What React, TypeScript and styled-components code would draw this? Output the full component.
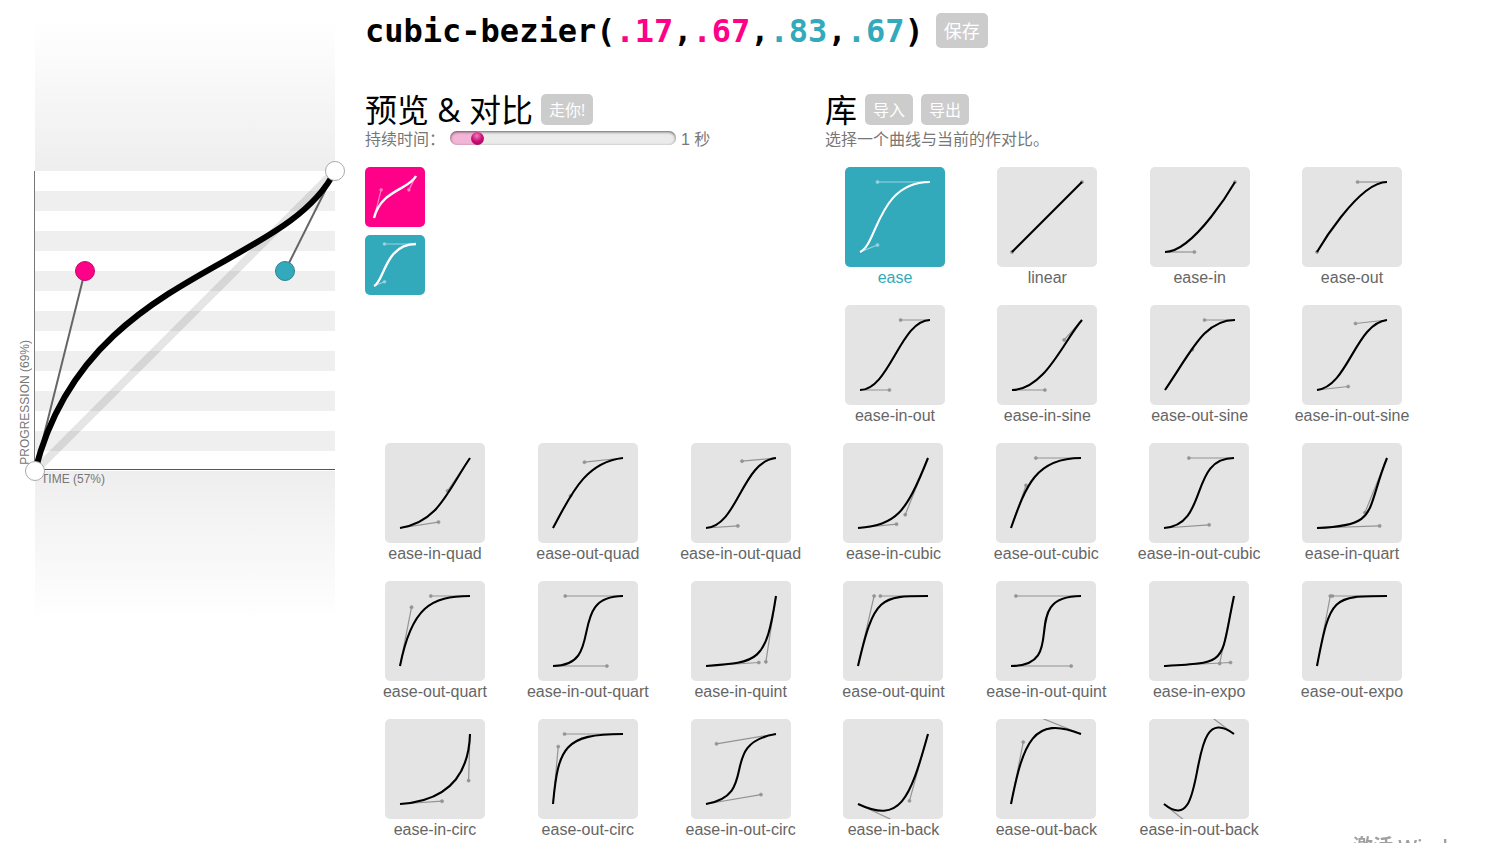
import React, { useState } from 'react';
import styled, { createGlobalStyle, css } from 'styled-components';

type Bezier = [number, number, number, number];
type Tone = 'plain' | 'pink' | 'teal';

const PINK = '#f08';
const TEAL = '#3ab';
const CJK = '"Noto Sans CJK SC"';

const GlobalStyle = createGlobalStyle`
  * { box-sizing: border-box; }
  body {
    margin: 0;
    background: #fff;
    color: #000;
    font: 16px/22px "Liberation Sans", ${CJK}, sans-serif;
  }
`;

const Page = styled.div`
  display: flex;
  align-items: flex-start;
  min-height: 100vh;
  overflow: hidden;
`;

/* ---------- plot ---------- */

const PlotColumn = styled.section`
  flex: none;
  width: 365px;
  padding: 21px 30px 0 35px;
`;

const Fade = styled.div<{ $to: 'top' | 'bottom' }>`
  height: 150px;
  background: linear-gradient(to ${p => p.$to}, #eee, #fff);
`;

const Plane = styled.div`
  position: relative;
  height: 300px;
  background: repeating-linear-gradient(to bottom, #fff 0 20px, #efefef 20px 40px);
`;

const PlaneDrawing = styled.svg`
  position: absolute;
  inset: 0;
  display: block;
  overflow: visible;
`;

const AxisLabel = styled.span<{ $vertical?: boolean }>`
  position: absolute;
  font-size: 12px;
  line-height: 16px;
  color: #777;
  text-transform: uppercase;
  white-space: nowrap;
  ${p =>
    p.$vertical
      ? css`
          right: 100%;
          bottom: 6px;
          margin-right: 2px;
          writing-mode: vertical-rl;
          transform: rotate(180deg);
        `
      : css`
          top: 100%;
          left: 6px;
        `}
`;

const Handle = styled.button<{ $fill: string; $edge: string }>`
  position: absolute;
  width: 20px;
  height: 20px;
  margin: -10px;
  padding: 0;
  border: 1px solid ${p => p.$edge};
  border-radius: 50%;
  background: ${p => p.$fill};
  cursor: pointer;
`;

/* ---------- main column ---------- */

const Main = styled.main`
  flex: 1;
  min-width: 0;
  padding: 12px 87px 0 0;
`;

const Header = styled.header`
  display: flex;
  align-items: center;
  gap: 12px;
  margin-bottom: 45px;
`;

const Formula = styled.h1`
  margin: 0;
  padding-top: 2px;
  font: bold 32px/35px "DejaVu Sans Mono", monospace;
`;

const Coordinate = styled.span<{ $color: string }>`
  color: ${p => p.$color};
`;

const Button = styled.button<{ $large?: boolean }>`
  height: ${p => (p.$large ? 35 : 31)}px;
  padding: 0 8px;
  border: 0;
  border-radius: 5px;
  background: #ccc;
  color: #fff;
  font: ${p => (p.$large ? 18 : 16)}px/30px "Open Sans", ${CJK}, sans-serif;
  cursor: pointer;
`;

const Sections = styled.div`
  display: flex;
`;

const Preview = styled.section`
  flex: none;
  width: 460px;
`;

const Library = styled.section`
  flex: 1;
  min-width: 0;
`;

const SectionHead = styled.div`
  display: flex;
  align-items: center;
  gap: 8px;
  margin-bottom: 4px;
`;

const Title = styled.h2`
  margin: 0;
  font: 32px/31px "Open Sans", ${CJK}, sans-serif;
`;

const Info = styled.div`
  display: flex;
  align-items: center;
  height: 22px;
  margin-bottom: 16px;
  color: #777;
  gap: 5px;
`;

const Slider = styled.input`
  appearance: none;
  width: 226px;
  height: 14px;
  margin: 0 0 4px;
  border-radius: 7px;
  background: linear-gradient(to right, #f2b5d6 27px, #ebebeb 27px);
  box-shadow: inset 0 1px 3px #0009;

  &::-webkit-slider-thumb {
    appearance: none;
    width: 13px;
    height: 13px;
    border-radius: 50%;
    background: radial-gradient(circle at 45% 30%, #f07fb9, #d0107a 45%, #8c0050);
  }
`;

const Compare = styled.div`
  display: flex;
  flex-direction: column;
  gap: 8px;
`;

const Curves = styled.nav`
  display: flex;
  flex-direction: column;
  padding-left: 20px;
`;

const CurveRow = styled.div<{ $columns: number }>`
  display: grid;
  grid-template-columns: repeat(${p => p.$columns}, 100px);
  justify-content: space-between;
  padding-bottom: 16px;
`;

const CurveLink = styled.a<{ $active: boolean }>`
  display: flex;
  flex-direction: column;
  align-items: center;
  color: ${p => (p.$active ? TEAL : '#666')};
  text-decoration: none;
  white-space: nowrap;
`;

const toneFill = { plain: '#e4e4e4', pink: PINK, teal: TEAL };

const Tile = styled.svg<{ $tone: Tone; $size: number }>`
  display: block;
  flex: none;
  width: ${p => p.$size}px;
  height: ${p => p.$size}px;
  border-radius: 5px;
  background: ${p => toneFill[p.$tone]};
  color: ${p => (p.$tone === 'plain' ? '#000' : '#fff')};
  overflow: hidden;
`;

const Watermark = styled.div`
  position: fixed;
  right: 0;
  bottom: -17px;
  width: 136px;
  font: 600 20px/27px "Open Sans", ${CJK}, sans-serif;
  color: #a0a0a0;
  white-space: nowrap;
  pointer-events: none;
`;

/* ---------- pieces ---------- */

function CurveTile({ curve, tone = 'plain', size = 100 }: { curve: Bezier; tone?: Tone; size?: number }) {
  const [x1, y1, x2, y2] = curve;
  const px = (v: number) => 15 + v * 70;
  const py = (v: number) => 85 - v * 70;
  const small = size < 100;
  return (
    <Tile $tone={tone} $size={size} viewBox="0 0 100 100" aria-hidden="true">
      <g stroke="currentColor" fill="currentColor" opacity={tone === 'plain' ? 0.35 : 0.5}>
        <path d={`M15 85L${px(x1)} ${py(y1)}M85 15L${px(x2)} ${py(y2)}`} strokeWidth={small ? 2 : 1.2} />
        <circle cx={px(x1)} cy={py(y1)} r={small ? 2.6 : 1.6} strokeWidth=".5" />
        <circle cx={px(x2)} cy={py(y2)} r={small ? 2.6 : 1.6} strokeWidth=".5" />
      </g>
      <path
        d={`M15 85C${px(x1)} ${py(y1)} ${px(x2)} ${py(y2)} 85 15`}
        fill="none"
        stroke="currentColor"
        strokeWidth={small ? 4 : 2.1}
      />
    </Tile>
  );
}

const basicCurves: Array<[string, Bezier]> = [
  ['ease', [0.25, 0.1, 0.25, 1]],
  ['linear', [0, 0, 1, 1]],
  ['ease-in', [0.42, 0, 1, 1]],
  ['ease-out', [0, 0, 0.58, 1]],
  ['ease-in-out', [0.42, 0, 0.58, 1]],
  ['ease-in-sine', [0.47, 0, 0.745, 0.715]],
  ['ease-out-sine', [0.39, 0.575, 0.565, 1]],
  ['ease-in-out-sine', [0.445, 0.05, 0.55, 0.95]],
];

const moreCurves: Array<[string, Bezier]> = [
  ['ease-in-quad', [0.55, 0.085, 0.68, 0.53]],
  ['ease-out-quad', [0.25, 0.46, 0.45, 0.94]],
  ['ease-in-out-quad', [0.455, 0.03, 0.515, 0.955]],
  ['ease-in-cubic', [0.55, 0.055, 0.675, 0.19]],
  ['ease-out-cubic', [0.215, 0.61, 0.355, 1]],
  ['ease-in-out-cubic', [0.645, 0.045, 0.355, 1]],
  ['ease-in-quart', [0.895, 0.03, 0.685, 0.22]],
  ['ease-out-quart', [0.165, 0.84, 0.44, 1]],
  ['ease-in-out-quart', [0.77, 0, 0.175, 1]],
  ['ease-in-quint', [0.755, 0.05, 0.855, 0.06]],
  ['ease-out-quint', [0.23, 1, 0.32, 1]],
  ['ease-in-out-quint', [0.86, 0, 0.07, 1]],
  ['ease-in-expo', [0.95, 0.05, 0.795, 0.035]],
  ['ease-out-expo', [0.19, 1, 0.22, 1]],
  ['ease-in-circ', [0.6, 0.04, 0.98, 0.335]],
  ['ease-out-circ', [0.075, 0.82, 0.165, 1]],
  ['ease-in-out-circ', [0.785, 0.135, 0.15, 0.86]],
  ['ease-in-back', [0.6, -0.28, 0.735, 0.045]],
  ['ease-out-back', [0.175, 0.885, 0.32, 1.275]],
  ['ease-in-out-back', [0.68, -0.55, 0.265, 1.55]],
];

const chunk = <T,>(items: T[], size: number): T[][] =>
  Array.from({ length: Math.ceil(items.length / size) }, (_, i) => items.slice(i * size, (i + 1) * size));

export default function App() {
  const [selected, setSelected] = useState('ease');
  const [duration, setDuration] = useState(10);
  const selectedCurve = [...basicCurves, ...moreCurves].find(([name]) => name === selected)![1];

  const renderCurve = ([name, curve]: [string, Bezier]) => (
    <CurveLink
      key={name}
      href={`#${name}`}
      $active={name === selected}
      onClick={() => setSelected(name)}
    >
      <CurveTile curve={curve} tone={name === selected ? 'teal' : 'plain'} />
      {name}
    </CurveLink>
  );

  return (
    <>
      <GlobalStyle />
      <Page>
        <PlotColumn>
          <Fade $to="top" />
          <Plane>
            <PlaneDrawing width="300" height="300" viewBox="0 0 300 300" fill="none" aria-hidden="true">
              <path d="M0 300L300 0" stroke="#000" strokeOpacity=".1" strokeWidth="8" />
              <path d="M-.5 0V300" stroke="#777" />
              <path d="M0 298.500H300" stroke="#555" />
              <path d="M0 300L50 100M300 0L250 100" stroke="#666" strokeWidth="2" />
              <path d="M0 300C50 100 250 100 300 0" stroke="#000" strokeWidth="6" />
            </PlaneDrawing>
            <AxisLabel $vertical>Progression (69%)</AxisLabel>
            <AxisLabel>Time (57%)</AxisLabel>
            <Handle aria-label="P0" $fill="#fff" $edge="#aaa" style={{ left: 0, top: 300 }} />
            <Handle aria-label="P1" $fill={PINK} $edge="#c0086c" style={{ left: 50, top: 100 }} />
            <Handle aria-label="P2" $fill={TEAL} $edge="#2b8290" style={{ left: 250, top: 100 }} />
            <Handle aria-label="P3" $fill="#fff" $edge="#aaa" style={{ left: 300, top: 0 }} />
          </Plane>
          <Fade $to="bottom" />
        </PlotColumn>

        <Main>
          <Header>
            <Formula>
              cubic-bezier(<Coordinate $color={PINK}>.17</Coordinate>,
              <Coordinate $color={PINK}>.67</Coordinate>,
              <Coordinate $color={TEAL}>.83</Coordinate>,
              <Coordinate $color={TEAL}>.67</Coordinate>)
            </Formula>
            <Button $large>保存</Button>
          </Header>

          <Sections>
            <Preview>
              <SectionHead>
                <Title>预览 &amp; 对比</Title>
                <Button>走你!</Button>
              </SectionHead>
              <Info>
                <label htmlFor="duration">持续时间：</label>
                <Slider
                  id="duration"
                  type="range"
                  min="0"
                  max="100"
                  value={duration}
                  onChange={e => setDuration(Number(e.target.value))}
                />
                <output htmlFor="duration">{duration / 10} 秒</output>
              </Info>
              <Compare>
                <CurveTile curve={[0.17, 0.67, 0.83, 0.67]} tone="pink" size={60} />
                <CurveTile curve={selectedCurve} tone="teal" size={60} />
              </Compare>
            </Preview>

            <Library>
              <SectionHead>
                <Title>库</Title>
                <Button>导入</Button>
                <Button>导出</Button>
              </SectionHead>
              <Info>选择一个曲线与当前的作对比。</Info>
              <Curves>
                {chunk(basicCurves, 4).map(row => (
                  <CurveRow $columns={4} key={row[0][0]}>{row.map(renderCurve)}</CurveRow>
                ))}
              </Curves>
            </Library>
          </Sections>

          <Curves>
            {chunk(moreCurves, 7).map(row => (
              <CurveRow $columns={7} key={row[0][0]}>{row.map(renderCurve)}</CurveRow>
            ))}
          </Curves>
        </Main>
      </Page>
      <Watermark>激活 Windows</Watermark>
    </>
  );
}
